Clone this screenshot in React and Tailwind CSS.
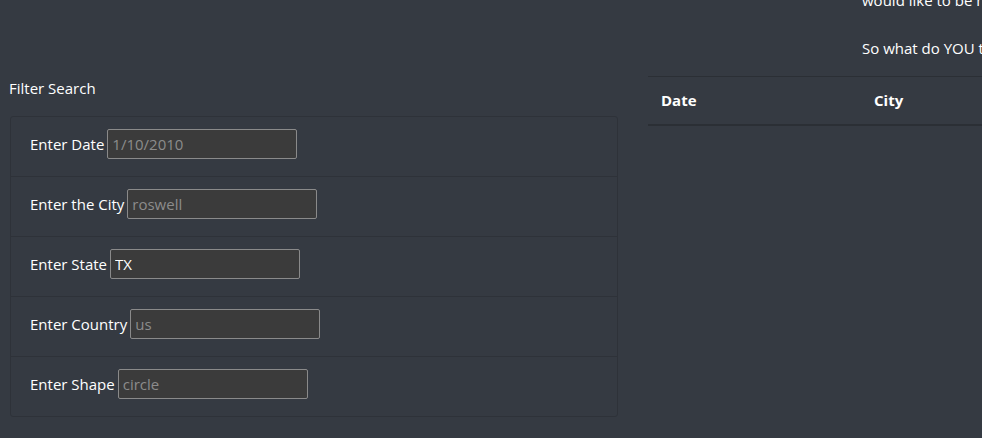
import { useState } from 'react';

const fields = [
  { label: 'Enter Date', id: 'datetime', placeholder: '1/10/2010', value: '' },
  { label: 'Enter the City', id: 'city', placeholder: 'roswell', value: '' },
  { label: 'Enter State', id: 'state', placeholder: 'ca', value: 'TX' },
  { label: 'Enter Country', id: 'country', placeholder: 'us', value: '' },
  { label: 'Enter Shape', id: 'shape', placeholder: 'circle', value: '' },
];

function FilterRow({ field }) {
  const [val, setVal] = useState(field.value);
  return (
    <li className="flex items-start h-[60px] pt-[12px] px-[19px] border-b border-[#2e3239] last:border-b-0 last:h-[59px]">
      <label htmlFor={field.id} className="mr-[3px] leading-[30px] text-[15px]">{field.label}</label>
      <input
        id={field.id}
        type="text"
        value={val}
        onChange={(e) => setVal(e.target.value)}
        placeholder={field.placeholder}
        className="w-[190px] h-[30px] px-[4px] bg-[#3b3b3b] border border-[#8a8a8a] rounded-[2px] text-white text-[15px] placeholder:text-[#8c8c8c] outline-none"
      />
    </li>
  );
}

export default function App() {
  return (
    <div className="w-[982px] h-[438px] overflow-hidden bg-[#353a42] text-white text-[16px]" style={{ fontFamily: '"Open Sans", "Noto Sans", sans-serif' }}>
      <div className="flex">
        {/* left column */}
        <div className="w-[628px] shrink-0 pl-[9px] pt-[78px]">
          <h5 className="text-[15px] leading-[20px]">Filter Search</h5>
          <ul className="mt-[18px] ml-[1px] w-[608px] border border-[#2e3239] rounded-[3px]">
            {fields.map((f) => <FilterRow key={f.id} field={f} />)}
          </ul>
        </div>

        {/* right column */}
        <div className="flex-1 min-w-0 pl-[20px]">
          <div className="pl-[214px] -mt-[11px] text-[15px] leading-[22px] whitespace-nowrap">
            <p>would like to be heard, and so much more.</p>
            <p className="mt-[26px]">So what do YOU think is out there?</p>
          </div>
          <table className="mt-[17px] w-[600px] text-left">
            <thead>
              <tr className="border-t border-[#2b2f35] border-b-2 border-b-[#2b2f35]">
                <th className="w-[214px] h-[48px] px-[13px] font-bold text-[15px]">Date</th>
                <th className="w-[214px] px-[12px] font-bold text-[15px]">City</th>
                <th className="px-[12px] font-bold text-[15px]">State</th>
              </tr>
            </thead>
          </table>
        </div>
      </div>
    </div>
  );
}
